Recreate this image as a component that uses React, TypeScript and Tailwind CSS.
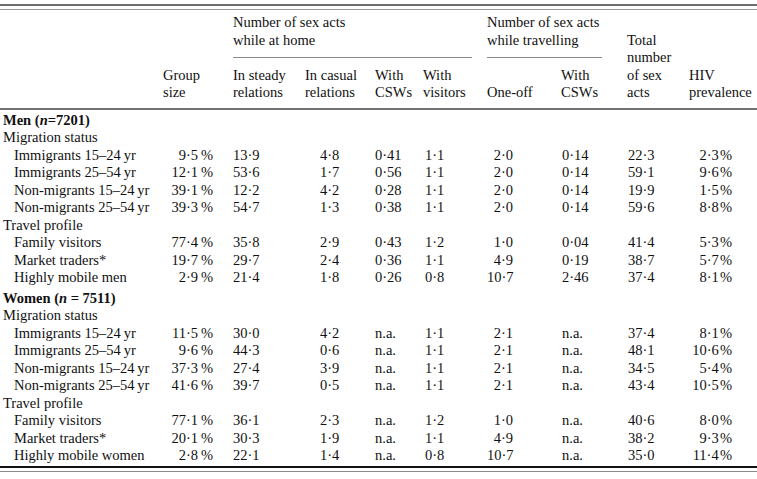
import React from "react";

type Row = [string, string, string, string, string, string, string, string, string, string];

const men: { title: string; rows: Row[] }[] = [
  {
    title: "Migration status",
    rows: [
      ["Immigrants 15–24\u2009yr", "9·5\u2009%", "13·9", "4·8", "0·41", "1·1", "2·0", "0·14", "22·3", "2·3\u200a%"],
      ["Immigrants 25–54\u2009yr", "12·1\u2009%", "53·6", "1·7", "0·56", "1·1", "2·0", "0·14", "59·1", "9·6\u200a%"],
      ["Non-migrants 15–24\u2009yr", "39·1\u2009%", "12·2", "4·2", "0·28", "1·1", "2·0", "0·14", "19·9", "1·5\u200a%"],
      ["Non-migrants 25–54\u2009yr", "39·3\u2009%", "54·7", "1·3", "0·38", "1·1", "2·0", "0·14", "59·6", "8·8\u200a%"],
    ],
  },
  {
    title: "Travel profile",
    rows: [
      ["Family visitors", "77·4\u2009%", "35·8", "2·9", "0·43", "1·2", "1·0", "0·04", "41·4", "5·3\u200a%"],
      ["Market traders*", "19·7\u2009%", "29·7", "2·4", "0·36", "1·1", "4·9", "0·19", "38·7", "5·7\u200a%"],
      ["Highly mobile men", "2·9\u2009%", "21·4", "1·8", "0·26", "0·8", "10·7", "2·46", "37·4", "8·1\u200a%"],
    ],
  },
];

const women: { title: string; rows: Row[] }[] = [
  {
    title: "Migration status",
    rows: [
      ["Immigrants 15–24\u2009yr", "11·5\u2009%", "30·0", "4·2", "n.a.", "1·1", "2·1", "n.a.", "37·4", "8·1\u200a%"],
      ["Immigrants 25–54\u2009yr", "9·6\u2009%", "44·3", "0·6", "n.a.", "1·1", "2·1", "n.a.", "48·1", "10·6\u200a%"],
      ["Non-migrants 15–24\u2009yr", "37·3\u2009%", "27·4", "3·9", "n.a.", "1·1", "2·1", "n.a.", "34·5", "5·4\u200a%"],
      ["Non-migrants 25–54\u2009yr", "41·6\u2009%", "39·7", "0·5", "n.a.", "1·1", "2·1", "n.a.", "43·4", "10·5\u200a%"],
    ],
  },
  {
    title: "Travel profile",
    rows: [
      ["Family visitors", "77·1\u2009%", "36·1", "2·3", "n.a.", "1·2", "1·0", "n.a.", "40·6", "8·0\u200a%"],
      ["Market traders*", "20·1\u2009%", "30·3", "1·9", "n.a.", "1·1", "4·9", "n.a.", "38·2", "9·3\u200a%"],
      ["Highly mobile women", "2·8\u2009%", "22·1", "1·4", "n.a.", "0·8", "10·7", "n.a.", "35·0", "11·4\u200a%"],
    ],
  },
];

const cols = "grid grid-cols-[163px_70px_72px_70px_48px_64px_74px_66px_62px_68px]";

function DataRow({ r }: { r: Row }) {
  return (
    <div className={`${cols} h-[17.5px]`}>
      <div className="pl-[14px] whitespace-nowrap">{r[0]}</div>
      <div className="text-right pr-[20px] whitespace-nowrap">{r[1]}</div>
      <div>{r[2]}</div>
      <div className="pl-[15px]">{r[3]}</div>
      <div>{r[4]}</div>
      <div className="pl-[2px]">{r[5]}</div>
      <div className="text-right pr-[48px]">{r[6]}</div>
      <div className="pl-[1px]">{r[7]}</div>
      <div className="pl-[1px]">{r[8]}</div>
      <div className="text-right pr-[25px] whitespace-nowrap">{r[9]}</div>
    </div>
  );
}

function Block({ label, groups, first }: { label: React.ReactNode; groups: { title: string; rows: Row[] }[]; first?: boolean }) {
  return (
    <div className={first ? "" : "mt-[3px]"}>
      <div className="h-[17.5px] pl-[3px] font-bold whitespace-nowrap">{label}</div>
      {groups.map(g => (
        <div key={g.title}>
          <div className="h-[17.5px] pl-[3px]">{g.title}</div>
          {g.rows.map(r => (
            <DataRow key={r[0]} r={r} />
          ))}
        </div>
      ))}
    </div>
  );
}

export default function App() {
  return (
    <div
      className="w-[757px] h-[479px] bg-white text-[#111] text-[14.5px] leading-[17.5px] overflow-hidden"
      style={{ fontFamily: '"Liberation Serif", "Times New Roman", serif' }}
    >
      <div className="pt-[4px]">
        <div className="h-[2px] bg-[#6e6e6e]" />
        <div className="h-px mt-[3px] bg-[#9a9a9a]" />
      </div>

      {/* column heads */}
      <div className={`${cols} grid-rows-[35px_17.5px_35px] mt-[4px]`}>
        <div className="col-start-3 col-span-4 row-start-1">
          Number of sex acts
          <br />
          while at home
        </div>
        <div className="col-start-3 col-span-4 row-start-2 self-center">
          <div className="w-[239px] h-px bg-[#8a8a8a]" />
        </div>
        <div className="col-start-7 col-span-2 row-start-1">
          Number of sex acts
          <br />
          while travelling
        </div>
        <div className="col-start-7 col-span-2 row-start-2 self-center">
          <div className="w-[115px] h-px bg-[#8a8a8a]" />
        </div>
        <div className="col-start-9 row-start-1 row-span-3 self-end">
          Total
          <br />
          number
          <br />
          of sex
          <br />
          acts
        </div>
        <div className="col-start-2 row-start-3 self-end">
          Group
          <br />
          size
        </div>
        <div className="col-start-3 row-start-3 self-end">
          In steady
          <br />
          relations
        </div>
        <div className="col-start-4 row-start-3 self-end">
          In casual
          <br />
          relations
        </div>
        <div className="col-start-5 row-start-3 self-end">
          With
          <br />
          CSWs
        </div>
        <div className="col-start-6 row-start-3 self-end">
          With
          <br />
          visitors
        </div>
        <div className="col-start-7 row-start-3 self-end">One-off</div>
        <div className="col-start-8 row-start-3 self-end">
          With
          <br />
          CSWs
        </div>
        <div className="col-start-10 row-start-3 self-end">
          HIV
          <br />
          prevalence
        </div>
      </div>
      <div className="h-[2px] mt-[6px] bg-[#727272]" />

      <div className="mt-[2px]">
        <Block
          first
          label={
            <>
              Men (<i>n</i>=7201)
            </>
          }
          groups={men}
        />
        <Block
          label={
            <>
              Women (<i>n</i> = 7511)
            </>
          }
          groups={women}
        />
      </div>

      <div className="h-[2px] mt-[1px] bg-[#111]" />
      <div className="h-px mt-[3px] bg-[#8a8a8a]" />
    </div>
  );
}
